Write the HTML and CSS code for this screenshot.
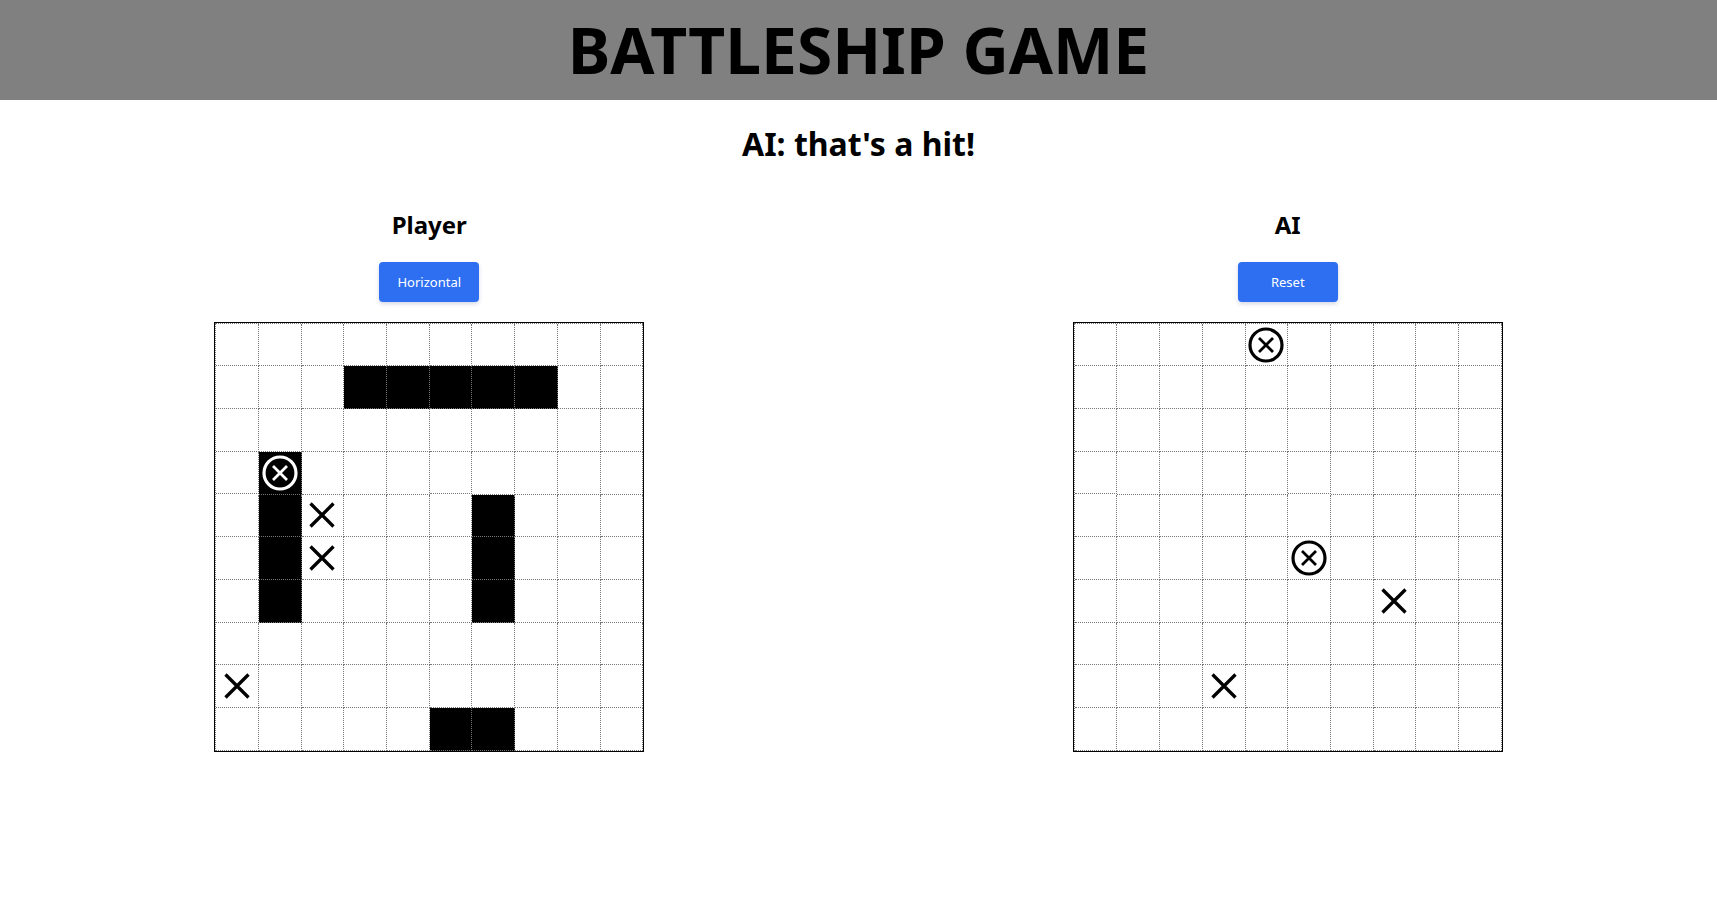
FILE: index.html
```html
<!DOCTYPE html>
<html lang="en">
<head>
<meta charset="utf-8">
<title>Battleship Game</title>
<link rel="stylesheet" href="styles.css">
</head>
<body>
<svg class="defs" width="0" height="0" aria-hidden="true">
  <defs>
    <symbol id="hit" viewBox="0 0 40 40">
      <circle cx="20" cy="20" r="16" fill="none" stroke="currentColor" stroke-width="3.2"/>
      <path d="M13 13 L27 27 M27 13 L13 27" stroke="currentColor" stroke-width="2.8" fill="none"/>
    </symbol>
    <symbol id="miss" viewBox="0 0 40 40">
      <path d="M8.5 8.5 L31.5 31.5 M31.5 8.5 L8.5 31.5" stroke="currentColor" stroke-width="3.3" fill="none"/>
    </symbol>
  </defs>
</svg>
<header class="topbar">
  <h1 class="title">BATTLESHIP GAME</h1>
</header>
<h1 class="status">AI: that's a hit!</h1>
<main class="boards">
  <section class="side">
    <h2 class="side-title">Player</h2>
    <button class="btn">Horizontal</button>
    <div class="board">
      <div class="board-inner">
        <!-- row 0 -->
        <div class="cell"></div><div class="cell"></div><div class="cell"></div><div class="cell"></div><div class="cell"></div><div class="cell"></div><div class="cell"></div><div class="cell"></div><div class="cell"></div><div class="cell"></div>
        <!-- row 1 -->
        <div class="cell"></div><div class="cell"></div><div class="cell"></div><div class="cell ship"></div><div class="cell ship"></div><div class="cell ship"></div><div class="cell ship"></div><div class="cell ship"></div><div class="cell"></div><div class="cell"></div>
        <!-- row 2 -->
        <div class="cell"></div><div class="cell"></div><div class="cell"></div><div class="cell"></div><div class="cell"></div><div class="cell"></div><div class="cell"></div><div class="cell"></div><div class="cell"></div><div class="cell"></div>
        <!-- row 3 -->
        <div class="cell"></div><div class="cell ship"><svg class="mark"><use href="#hit"/></svg></div><div class="cell"></div><div class="cell"></div><div class="cell"></div><div class="cell"></div><div class="cell"></div><div class="cell"></div><div class="cell"></div><div class="cell"></div>
        <!-- row 4 -->
        <div class="cell"></div><div class="cell ship"></div><div class="cell"><svg class="mark"><use href="#miss"/></svg></div><div class="cell"></div><div class="cell"></div><div class="cell"></div><div class="cell ship"></div><div class="cell"></div><div class="cell"></div><div class="cell"></div>
        <!-- row 5 -->
        <div class="cell"></div><div class="cell ship"></div><div class="cell"><svg class="mark"><use href="#miss"/></svg></div><div class="cell"></div><div class="cell"></div><div class="cell"></div><div class="cell ship"></div><div class="cell"></div><div class="cell"></div><div class="cell"></div>
        <!-- row 6 -->
        <div class="cell"></div><div class="cell ship"></div><div class="cell"></div><div class="cell"></div><div class="cell"></div><div class="cell"></div><div class="cell ship"></div><div class="cell"></div><div class="cell"></div><div class="cell"></div>
        <!-- row 7 -->
        <div class="cell"></div><div class="cell"></div><div class="cell"></div><div class="cell"></div><div class="cell"></div><div class="cell"></div><div class="cell"></div><div class="cell"></div><div class="cell"></div><div class="cell"></div>
        <!-- row 8 -->
        <div class="cell"><svg class="mark"><use href="#miss"/></svg></div><div class="cell"></div><div class="cell"></div><div class="cell"></div><div class="cell"></div><div class="cell"></div><div class="cell"></div><div class="cell"></div><div class="cell"></div><div class="cell"></div>
        <!-- row 9 -->
        <div class="cell"></div><div class="cell"></div><div class="cell"></div><div class="cell"></div><div class="cell"></div><div class="cell ship"></div><div class="cell ship"></div><div class="cell"></div><div class="cell"></div><div class="cell"></div>
      </div>
    </div>
  </section>
  <section class="side">
    <h2 class="side-title">AI</h2>
    <button class="btn">Reset</button>
    <div class="board">
      <div class="board-inner">
        <!-- row 0 -->
        <div class="cell"></div><div class="cell"></div><div class="cell"></div><div class="cell"></div><div class="cell"><svg class="mark"><use href="#hit"/></svg></div><div class="cell"></div><div class="cell"></div><div class="cell"></div><div class="cell"></div><div class="cell"></div>
        <!-- row 1 -->
        <div class="cell"></div><div class="cell"></div><div class="cell"></div><div class="cell"></div><div class="cell"></div><div class="cell"></div><div class="cell"></div><div class="cell"></div><div class="cell"></div><div class="cell"></div>
        <!-- row 2 -->
        <div class="cell"></div><div class="cell"></div><div class="cell"></div><div class="cell"></div><div class="cell"></div><div class="cell"></div><div class="cell"></div><div class="cell"></div><div class="cell"></div><div class="cell"></div>
        <!-- row 3 -->
        <div class="cell"></div><div class="cell"></div><div class="cell"></div><div class="cell"></div><div class="cell"></div><div class="cell"></div><div class="cell"></div><div class="cell"></div><div class="cell"></div><div class="cell"></div>
        <!-- row 4 -->
        <div class="cell"></div><div class="cell"></div><div class="cell"></div><div class="cell"></div><div class="cell"></div><div class="cell"></div><div class="cell"></div><div class="cell"></div><div class="cell"></div><div class="cell"></div>
        <!-- row 5 -->
        <div class="cell"></div><div class="cell"></div><div class="cell"></div><div class="cell"></div><div class="cell"></div><div class="cell"><svg class="mark"><use href="#hit"/></svg></div><div class="cell"></div><div class="cell"></div><div class="cell"></div><div class="cell"></div>
        <!-- row 6 -->
        <div class="cell"></div><div class="cell"></div><div class="cell"></div><div class="cell"></div><div class="cell"></div><div class="cell"></div><div class="cell"></div><div class="cell"><svg class="mark"><use href="#miss"/></svg></div><div class="cell"></div><div class="cell"></div>
        <!-- row 7 -->
        <div class="cell"></div><div class="cell"></div><div class="cell"></div><div class="cell"></div><div class="cell"></div><div class="cell"></div><div class="cell"></div><div class="cell"></div><div class="cell"></div><div class="cell"></div>
        <!-- row 8 -->
        <div class="cell"></div><div class="cell"></div><div class="cell"></div><div class="cell"><svg class="mark"><use href="#miss"/></svg></div><div class="cell"></div><div class="cell"></div><div class="cell"></div><div class="cell"></div><div class="cell"></div><div class="cell"></div>
        <!-- row 9 -->
        <div class="cell"></div><div class="cell"></div><div class="cell"></div><div class="cell"></div><div class="cell"></div><div class="cell"></div><div class="cell"></div><div class="cell"></div><div class="cell"></div><div class="cell"></div>
      </div>
    </div>
  </section>
</main>
</body>
</html>
```
FILE: styles.css
```css
html, body {
  margin: 0;
  padding: 0;
  background: #fff;
  color: #000;
  font-family: "Noto Sans", "Open Sans", sans-serif;
}

.defs {
  position: absolute;
  width: 0;
  height: 0;
  overflow: hidden;
}

.topbar {
  background: #808080;
  height: 100px;
}

.title {
  margin: 0;
  font-size: 64px;
  line-height: 100px;
  font-weight: 700;
  text-align: center;
}

.status {
  margin: 21.5px 0;
  font-size: 32px;
  font-weight: 700;
  text-align: center;
  line-height: normal;
}

.boards {
  display: flex;
}

.side {
  flex: 1 1 0;
  display: flex;
  flex-direction: column;
  align-items: center;
}

.side-title {
  margin: 21.7px 0 21px;
  font-size: 24px;
  font-weight: 700;
  line-height: normal;
}

.btn {
  width: 100px;
  height: 40px;
  border: none;
  border-radius: 4px;
  background: #2e6ff2;
  color: #fff;
  font-family: "Noto Sans", sans-serif;
  font-size: 13px;
  box-shadow: 0 2px 4px rgba(40, 60, 120, 0.2);
  padding: 0;
}

.board {
  margin-top: 20px;
  width: 430px;
  box-sizing: border-box;
  border: 1px solid #000;
}

.board-inner {
  display: grid;
  grid-template-columns: repeat(10, minmax(0, 1fr));
  border-top: 1px dotted #777;
  border-left: 1px dotted #777;
}

.cell {
  aspect-ratio: 1 / 1;
  min-width: 0;
  box-sizing: border-box;
  border-right: 1px dotted #777;
  border-bottom: 1px dotted #777;
  display: flex;
  align-items: center;
  justify-content: center;
  overflow: hidden;
  color: #000;
}

.cell.ship {
  background: #000;
  color: #fff;
}

.mark {
  width: 40px;
  height: 40px;
  flex: none;
}
```
